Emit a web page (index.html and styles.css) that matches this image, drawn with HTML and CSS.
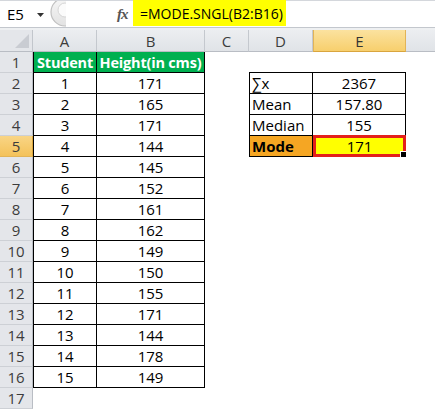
FILE: index.html
```html
<html>
<head>
<title>Mode in Excel</title>
<link rel="stylesheet" href="styles.css">
</head>
<body>
<div class="fbar">
  <div class="namebox">
    <span class="ref">E5</span>
    <svg class="dd" width="7" height="4" viewBox="0 0 7 4"><path d="M0 0h7L3.5 4z" fill="#333"/></svg>
  </div>
  <svg class="knob" width="18" height="26" viewBox="0 0 18 26">
    <defs>
      <linearGradient id="kg" x1="0" y1="0" x2="0" y2="1">
        <stop offset="0" stop-color="#f6f6f6"/>
        <stop offset="1" stop-color="#e2e2e2"/>
      </linearGradient>
    </defs>
    <circle cx="17" cy="11" r="14" fill="url(#kg)" stroke="#c0c0c0" stroke-width="1.2"/>
    <circle cx="17" cy="9" r="7" fill="#fbfbfb" stroke="#d6d6d6"/>
  </svg>
  <div class="fx">fx</div>
  <div class="formula"><span class="hl">=MODE.SNGL(B2:B16)</span></div>
</div>
<div class="gap"></div>

<div class="sheet">
  <div class="corner"><svg width="14" height="14" viewBox="0 0 14 14"><path d="M14 0v14H0z" fill="#c9ccd2"/></svg></div>
  <div class="ch">A</div><div class="ch">B</div><div class="ch">C</div><div class="ch">D</div><div class="ch sel">E</div><div class="ch"></div>

  <div class="rh">1</div><div class="c t la hd">Student</div><div class="c t hd">Height(in cms)</div><div class="c"></div><div class="c bb"></div><div class="c bb"></div><div class="c"></div>
  <div class="rh">2</div><div class="c t la">1</div><div class="c t">171</div><div class="c"></div><div class="c k">&sum;x</div><div class="c t">2367</div><div class="c"></div>
  <div class="rh">3</div><div class="c t la">2</div><div class="c t">165</div><div class="c"></div><div class="c k">Mean</div><div class="c t">157.80</div><div class="c"></div>
  <div class="rh">4</div><div class="c t la">3</div><div class="c t">171</div><div class="c"></div><div class="c k">Median</div><div class="c t">155</div><div class="c"></div>
  <div class="rh sel">5</div><div class="c t la">4</div><div class="c t">144</div><div class="c"></div><div class="c k mode">Mode</div><div class="c t active">171<span class="handle"></span></div><div class="c"></div>
  <div class="rh">6</div><div class="c t la">5</div><div class="c t">145</div><div class="c"></div><div class="c"></div><div class="c"></div><div class="c"></div>
  <div class="rh">7</div><div class="c t la">6</div><div class="c t">152</div><div class="c"></div><div class="c"></div><div class="c"></div><div class="c"></div>
  <div class="rh">8</div><div class="c t la">7</div><div class="c t">161</div><div class="c"></div><div class="c"></div><div class="c"></div><div class="c"></div>
  <div class="rh">9</div><div class="c t la">8</div><div class="c t">162</div><div class="c"></div><div class="c"></div><div class="c"></div><div class="c"></div>
  <div class="rh">10</div><div class="c t la">9</div><div class="c t">149</div><div class="c"></div><div class="c"></div><div class="c"></div><div class="c"></div>
  <div class="rh">11</div><div class="c t la">10</div><div class="c t">150</div><div class="c"></div><div class="c"></div><div class="c"></div><div class="c"></div>
  <div class="rh">12</div><div class="c t la">11</div><div class="c t">155</div><div class="c"></div><div class="c"></div><div class="c"></div><div class="c"></div>
  <div class="rh">13</div><div class="c t la">12</div><div class="c t">171</div><div class="c"></div><div class="c"></div><div class="c"></div><div class="c"></div>
  <div class="rh">14</div><div class="c t la">13</div><div class="c t">144</div><div class="c"></div><div class="c"></div><div class="c"></div><div class="c"></div>
  <div class="rh">15</div><div class="c t la">14</div><div class="c t">178</div><div class="c"></div><div class="c"></div><div class="c"></div><div class="c"></div>
  <div class="rh">16</div><div class="c t la">15</div><div class="c t">149</div><div class="c"></div><div class="c"></div><div class="c"></div><div class="c"></div>
  <div class="rh">17</div><div class="c"></div><div class="c"></div><div class="c"></div><div class="c"></div><div class="c"></div><div class="c"></div>
</div>
</body>
</html>
```

FILE: styles.css
```css
body {
    margin: 0;
    background: #fff;
    font-family: "Open Sans", "Liberation Sans", sans-serif;
    font-size: 15px;
    color: #000;
    overflow: hidden;
}

/* formula bar */
.fbar {
    display: flex;
    align-items: stretch;
    border-top: 1px solid #d4d7dc;
    border-bottom: 1px solid #c3c7cd;
    box-sizing: border-box;
    height: 28px;
    background: #fff;
}

.namebox {
    width: 48px;
    display: flex;
    align-items: center;
    box-sizing: border-box;
    padding-left: 7px;
}

.ref {
    width: 30px;
}

.dd {
    margin-top: 1px;
}

.fx {
    margin-left: 51px;
    width: 16px;
    font-family: "Liberation Serif", serif;
    font-style: italic;
    font-weight: bold;
    font-size: 15px;
    color: #555;
    display: flex;
    align-items: center;
    letter-spacing: -1px;
}

.formula {
    flex: 1;
    display: flex;
    margin-top: -1px;
}

.hl {
    background: #ffff00;
    width: 146px;
    padding-left: 7px;
    display: flex;
    align-items: center;
    height: 26px;
    font-size: 14px;
}

.gap {
    height: 2px;
    background: #eef0f2;
}

/* grid */
.sheet {
    display: grid;
    grid-template-columns: 33px 64px 108px 44px 64px 93px 40px;
    grid-template-rows: 22px;
    grid-auto-rows: 21px;
}

.corner {
    background: #e4e6ea;
    border-right: 1px solid #c2c6cc;
    border-bottom: 1px solid #b9bdc4;
    box-sizing: border-box;
    display: flex;
    align-items: flex-end;
    justify-content: flex-end;
    padding: 0 3px 3px 0;
}

.ch {
    background: linear-gradient(#eceef1, #e0e3e7);
    border-right: 1px solid #c4c8ce;
    border-bottom: 1px solid #b9bdc4;
    box-sizing: border-box;
    display: flex;
    align-items: center;
    justify-content: center;
    color: #3c3c3c;
}

.ch.sel {
    background: linear-gradient(#fbe29f, #f7cf6d);
    border-right: 1px solid #e2b457;
    border-left: 1px solid #e2b457;
    border-bottom: 1px solid #d9a53e;
    color: #333;
}

.rh {
    background: #e4e6ea;
    border-right: 1px solid #b9bdc4;
    border-bottom: 1px solid #cdd0d5;
    box-sizing: border-box;
    display: flex;
    align-items: center;
    justify-content: center;
    color: #3c3c3c;
}

.rh.sel {
    background: linear-gradient(#f9d585, #f4c25a);
    border-right: 1px solid #d9a53e;
    border-bottom: 1px solid #e2b457;
}

.c {
    box-sizing: border-box;
    display: flex;
    align-items: center;
    justify-content: center;
    white-space: nowrap;
    position: relative;
    overflow: visible;
}

.t {
    border-right: 1px solid #000;
    border-bottom: 1px solid #000;
}

.la {
    border-left: 1px solid #000;
}

.hd {
    background: #00b050;
    color: #fff;
    font-weight: bold;
    font-size: 14.5px;
    letter-spacing: -0.2px;
}

.bb {
    border-bottom: 1px solid #000;
}

.k {
    justify-content: flex-start;
    padding-left: 2px;
    border-left: 1px solid #000;
    border-right: 1px solid #000;
    border-bottom: 1px solid #000;
}

.mode {
    background: #f5a623;
    font-weight: bold;
}

.active {
    background: #ffff00;
    border: 3px solid #e3201b;
    margin-top: -1px;
}

.handle {
    position: absolute;
    right: -4px;
    bottom: -4px;
    width: 5px;
    height: 5px;
    background: #000;
    border: 1px solid #fff;
}
```
